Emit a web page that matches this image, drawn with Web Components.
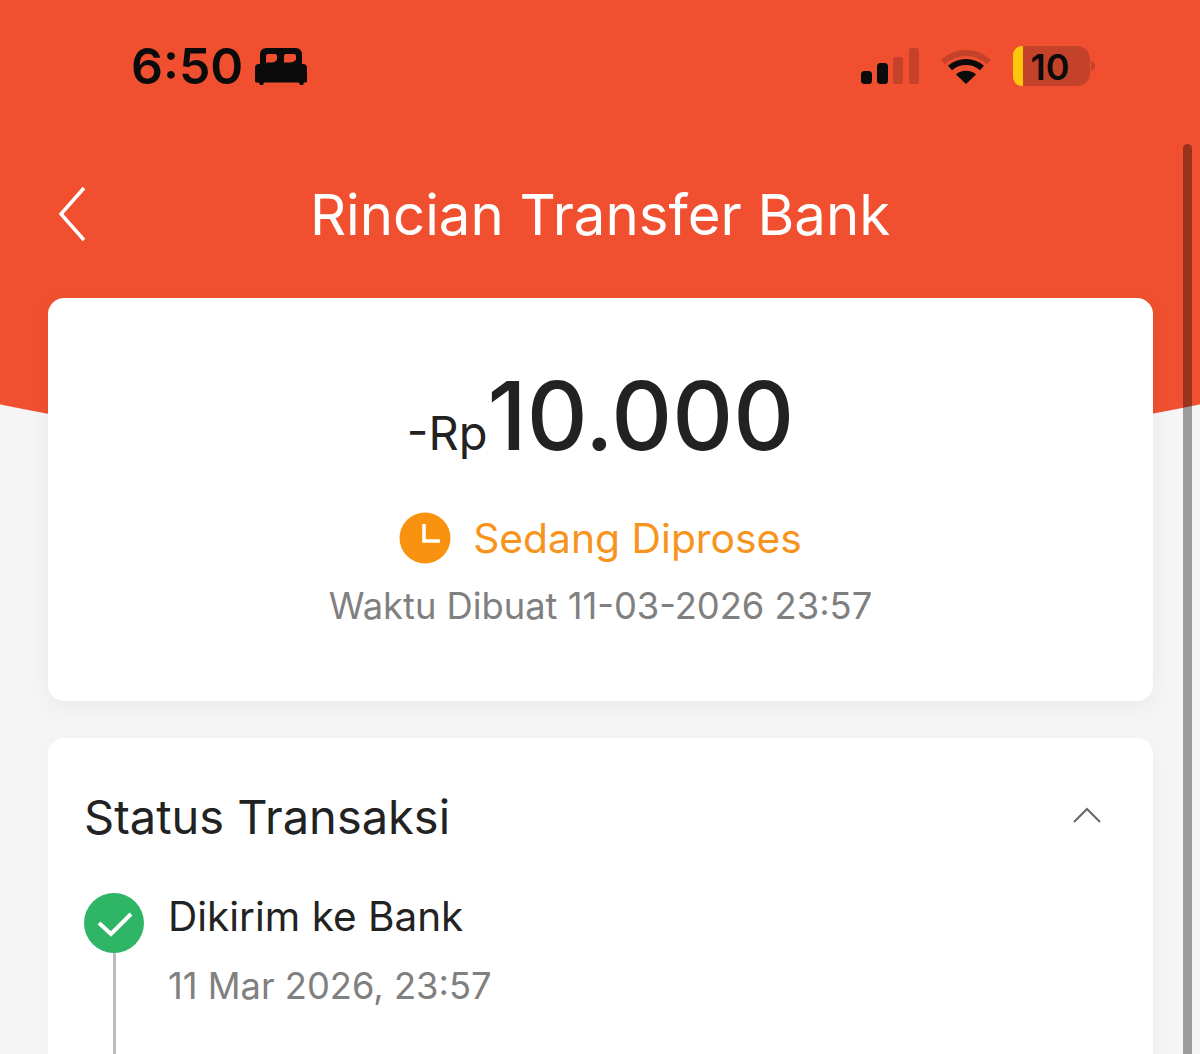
<!DOCTYPE html>
<html>
<head>
<meta charset="utf-8">
<style>
  html, body { margin: 0; height: 100%; overflow: hidden; }
  body { font-family: Inter, "Liberation Sans", sans-serif; }
</style>
</head>
<body>
<transfer-page>
  <status-bar></status-bar>
  <nav-bar>Rincian Transfer Bank</nav-bar>
  <amount-card></amount-card>
  <status-card>
    <timeline-step title="Dikirim ke Bank" time="11 Mar 2026, 23:57"></timeline-step>
  </status-card>
</transfer-page>

<script>
class TransferPage extends HTMLElement {
  constructor() {
    super();
    this.attachShadow({mode: "open"}).innerHTML = `
      <style>
        :host {
          display: flex;
          flex-direction: column;
          width: 1200px;
          height: 1054px;
          overflow: hidden;
          position: relative;
          background: radial-gradient(circle 3000px at 600px -2535px, #f0502f 2999.5px, #f5f5f6 3000.5px);
        }
        #scroll {
          position: absolute;
          left: 1183px;
          top: 144px;
          width: 9px;
          height: 930px;
          border-radius: 5px;
          background: rgba(0, 0, 0, 0.36);
        }
      </style>
      <slot></slot>
      <div id="scroll"></div>
    `;
  }
}
customElements.define("transfer-page", TransferPage);

class StatusBar extends HTMLElement {
  constructor() {
    super();
    this.attachShadow({mode: "open"}).innerHTML = `
      <style>
        :host {
          display: flex;
          flex: none;
          align-items: center;
          height: 54px;
          padding: 39px 105px 1px 131px;
          color: #0b0b0b;
          font-family: Inter, "Liberation Sans", sans-serif;
        }
        #time { font-size: 50px; font-weight: 600; line-height: 54px; }
        #bed { margin-left: 12px; }
        #right { margin-left: auto; display: flex; align-items: center; }
        #wifi { margin-left: 22px; }
        #battery { margin-left: 22px; position: relative; width: 82px; height: 40px; }
        #battery svg { display: block; }
        #level {
          position: absolute; left: 15px; top: 0; width: 44px;
          text-align: center; font-size: 36px; font-weight: 600; line-height: 42px;
        }
      </style>
      <span id="time">6:50</span>
      <svg id="bed" width="52" height="37" viewBox="0 0 52 37">
        <path fill="#0b0b0b" fill-rule="evenodd" d="M5 6a6 6 0 0 1 6-6h30a6 6 0 0 1 6 6v10H5zM11 14.500h6c2 0 4-1 5-3V8a2 2 0 0 0-2-2h-7a2 2 0 0 0-2 2zM29 14.500h6c2 0 5-1 6-3V8a2 2 0 0 0-2-2h-8a2 2 0 0 0-2 2z"/>
        <path fill="#0b0b0b" d="M4 16h44a4 4 0 0 1 4 4v13a1.500 1.500 0 0 1-1.500 1.500h-1.500l-1 2.500h-3l-1-2.500H9l-1 2.500H5l-1-2.500H1.500A1.500 1.500 0 0 1 0 33V20a4 4 0 0 1 4-4z"/>
      </svg>
      <div id="right">
        <svg width="58" height="36" viewBox="0 0 58 36">
          <rect x="0" y="23" width="11" height="13" rx="3.500" fill="#0b0b0b"/>
          <rect x="16" y="15" width="11" height="21" rx="3.500" fill="#0b0b0b"/>
          <rect x="32" y="9" width="10" height="27" rx="3" fill="#c4412a"/>
          <rect x="48" y="0" width="10" height="36" rx="3" fill="#c4412a"/>
        </svg>
        <svg id="wifi" width="50" height="36" viewBox="0 0 50 36">
          <path d="M2 14C15 2 35 2 48 14" fill="none" stroke="#c4412a" stroke-width="6"/>
          <path d="M9 20C18 12 32 12 41 20" fill="none" stroke="#0b0b0b" stroke-width="6"/>
          <path d="M25 36L15 26.500C20 21.500 30 21.500 35 26.500z" fill="#0b0b0b"/>
        </svg>
        <div id="battery">
          <svg width="82" height="40" viewBox="0 0 82 40">
            <rect x="0" y="0" width="77" height="40" rx="13" fill="#c4412a"/>
            <path d="M9 0h1v40h-1A9 9 0 0 1 0 31V9A9 9 0 0 1 9 0z" fill="#fdc80b"/>
            <path d="M78 15c3 1 4 3 4 5s-1 4-4 5z" fill="#c4412a"/>
          </svg>
          <span id="level">10</span>
        </div>
      </div>
    `;
  }
}
customElements.define("status-bar", StatusBar);

class NavBar extends HTMLElement {
  constructor() {
    super();
    this.attachShadow({mode: "open"}).innerHTML = `
      <style>
        :host {
          display: flex;
          flex: none;
          align-items: center;
          justify-content: center;
          position: relative;
          height: 132px;
          margin-top: 54px;
          margin-bottom: 18px;
          color: #fff;
          font-size: 56.3px;
        }
        svg { position: absolute; left: 58px; top: 38px; }
      </style>
      <svg width="30" height="56" viewBox="0 0 30 56">
        <path d="M26 2L3 28l23 26" fill="none" stroke="#fff" stroke-width="3.500"/>
      </svg>
      <slot></slot>
    `;
  }
}
customElements.define("nav-bar", NavBar);

class AmountCard extends HTMLElement {
  constructor() {
    super();
    this.attachShadow({mode: "open"}).innerHTML = `
      <style>
        :host {
          display: flex;
          flex: none;
          flex-direction: column;
          align-items: center;
          box-sizing: border-box;
          width: 1105px;
          height: 403px;
          margin-left: 48px;
          padding-top: 60px;
          background: #fff;
          border-radius: 16px;
          box-shadow: 0 6px 24px rgba(0, 0, 0, 0.05);
        }
        #amount { display: flex; align-items: baseline; color: #222; line-height: 116px; height: 116px; }
        #cur { font-size: 47px; }
        #val { font-size: 94.5px; font-weight: 500; }
        #state {
          display: flex; align-items: center; gap: 22px;
          margin-top: 38px; color: #f7941d; font-size: 40.8px; line-height: 52px;
        }
        #made { margin-top: 19px; color: #808080; font-size: 36.3px; line-height: 46px; }
      </style>
      <div id="amount"><span id="cur">-Rp</span><span id="val">10.000</span></div>
      <div id="state">
        <svg width="52" height="52" viewBox="0 0 52 52">
          <circle cx="26" cy="26" r="25.500" fill="#f9920f"/>
          <path d="M25 12v17h16" fill="none" stroke="#fff" stroke-width="3.500"/>
        </svg>
        <span>Sedang Diproses</span>
      </div>
      <div id="made">Waktu Dibuat 11-03-2026 23:57</div>
    `;
  }
}
customElements.define("amount-card", AmountCard);

class StatusCard extends HTMLElement {
  constructor() {
    super();
    this.attachShadow({mode: "open"}).innerHTML = `
      <style>
        :host {
          display: block;
          flex: none;
          box-sizing: border-box;
          width: 1105px;
          height: 500px;
          margin: 37px 0 0 48px;
          padding: 48px 36px 0;
          background: #fff;
          border-radius: 16px;
          box-shadow: 0 6px 24px rgba(0, 0, 0, 0.03);
        }
        #head { display: flex; align-items: center; justify-content: space-between; height: 60px; margin-bottom: 47px; }
        h2 { margin: 0; font-size: 47px; font-weight: 400; color: #222; }
        svg { margin-right: 15px; }
      </style>
      <div id="head">
        <h2>Status Transaksi</h2>
        <svg width="30" height="18" viewBox="0 0 30 18">
          <path d="M2 15L15 2l13 13" fill="none" stroke="#666" stroke-width="2"/>
        </svg>
      </div>
      <slot></slot>
    `;
  }
}
customElements.define("status-card", StatusCard);

class TimelineStep extends HTMLElement {
  constructor() {
    super();
    this.attachShadow({mode: "open"}).innerHTML = `
      <style>
        :host { display: flex; gap: 24px; }
        #rail { display: flex; flex-direction: column; align-items: center; width: 60px; }
        #line { width: 3px; height: 200px; background: #bdbdbd; }
        svg { display: block; flex: none; }
        #name { color: #222; font-size: 40.5px; line-height: 48px; }
        #when { margin-top: 22px; color: #808080; font-size: 36.3px; line-height: 46px; }
      </style>
      <div id="rail">
        <svg width="60" height="60" viewBox="0 0 60 60">
          <circle cx="30" cy="30" r="30" fill="#2fb566"/>
          <path d="M15 30l12 11 20-20" fill="none" stroke="#fff" stroke-width="4"/>
        </svg>
        <div id="line"></div>
      </div>
      <div>
        <div id="name"></div>
        <div id="when"></div>
      </div>
    `;
  }
  connectedCallback() {
    this.shadowRoot.querySelector("#name").textContent = this.getAttribute("title");
    this.shadowRoot.querySelector("#when").textContent = this.getAttribute("time");
  }
}
customElements.define("timeline-step", TimelineStep);
</script>
</body>
</html>
